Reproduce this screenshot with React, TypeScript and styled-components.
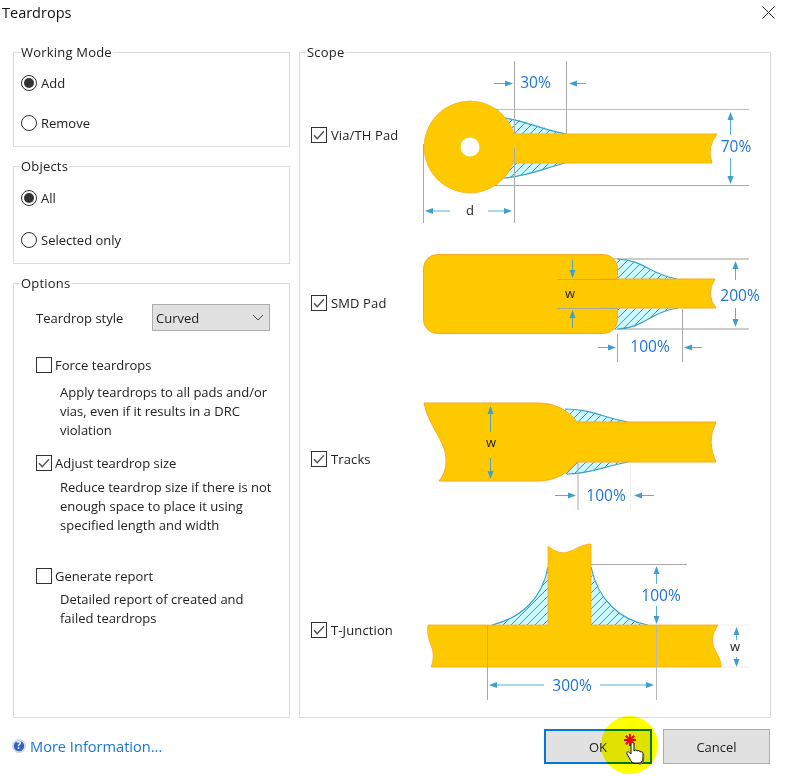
import React from "react";
import styled, { createGlobalStyle } from "styled-components";

const Global = createGlobalStyle`
  html, body { margin: 0; padding: 0; background: #fff; }
  body { font-family: "Open Sans", "Noto Sans", "Liberation Sans", sans-serif; color: #222; }
`;

const Page = styled.div`
  position: relative;
  width: 786px;
  height: 776px;
  overflow: hidden;
  background: #fff;
  font-size: 13px;
  line-height: 18px;
  display: flex;
  flex-direction: column;
`;
const TitleBar = styled.header`
  height: 43px;
  flex: none;
  display: flex;
  justify-content: space-between;
  padding: 3px 11px 0 2px;
  box-sizing: border-box;
`;
const Title = styled.h1`
  margin: 0;
  font-size: 14.5px;
  font-weight: 400;
  line-height: 20px;
  color: #111;
`;
const CloseIcon = styled.svg`
  width: 13px;
  height: 13px;
  margin-top: 3px;
`;
const Main = styled.main`
  display: flex;
  gap: 9px;
  padding: 0 15px 0 13px;
  height: 675px;
  flex: none;
`;
const LeftColumn = styled.div`
  width: 277px;
  flex: none;
  display: flex;
  flex-direction: column;
  gap: 10px;
`;
const Group = styled.fieldset<{ $grow?: boolean; $height?: number }>`
  margin: 0;
  padding: 0 7px;
  min-width: 0;
  border: 1px solid #dcdcdc;
  box-sizing: border-box;
  ${(p) => (p.$height ? `height: ${p.$height}px; flex: none;` : "")}
  ${(p) => (p.$grow ? "flex: 1;" : "")}
`;
const Legend = styled.legend`
  padding: 0 1px 0 0;
  font-size: 13px;
  line-height: 18px;
  letter-spacing: 0.2px;
`;
const RadioItem = styled.div<{ $top: number }>`
  display: flex;
  align-items: center;
  gap: 4px;
  height: 16px;
  margin-top: ${(p) => p.$top}px;
`;
const RadioMark = styled.span<{ $on?: boolean }>`
  width: 16px;
  height: 16px;
  box-sizing: border-box;
  border: 1px solid #333;
  border-radius: 50%;
  display: flex;
  align-items: center;
  justify-content: center;
  &::after {
    content: "";
    width: 10px;
    height: 10px;
    border-radius: 50%;
    background: ${(p) => (p.$on ? "#333" : "transparent")};
  }
`;
const OptionsBody = styled.div`
  padding-left: 15px;
`;
const StyleRow = styled.div`
  display: flex;
  align-items: center;
  justify-content: space-between;
  height: 27px;
  width: 234px;
  margin-top: 12px;
`;
const Select = styled.div`
  width: 118px;
  height: 27px;
  box-sizing: border-box;
  background: #e1e1e1;
  border: 1px solid #adadad;
  display: flex;
  align-items: center;
  justify-content: space-between;
  padding: 0 5px 0 3px;
`;
const CheckItem = styled.label<{ $top: number }>`
  display: flex;
  align-items: center;
  gap: 3px;
  height: 16px;
  white-space: nowrap;
  margin-top: ${(p) => p.$top}px;
`;
const Box = styled.span`
  width: 16px;
  height: 16px;
  flex: none;
  box-sizing: border-box;
  border: 1px solid #333;
  display: flex;
  align-items: center;
  justify-content: center;
  background: #fff;
`;
const Desc = styled.p<{ $top: number }>`
  margin: ${(p) => p.$top}px 0 0 24px;
  line-height: 19px;
  width: 214px;
`;
const ScopeRow = styled.div<{ $h: number }>`
  display: flex;
  height: ${(p) => p.$h}px;
  margin-left: 4px;
`;
const ScopeCheckSlot = styled.div<{ $top: number }>`
  width: 103px;
  flex: none;
  margin-top: ${(p) => p.$top}px;
`;
const ScopeCheck = styled(CheckItem)`
  gap: 4px;
  margin-top: 0;
  letter-spacing: 0.12px;
`;
const Figure = styled.svg`
  width: 350px;
  flex: none;
  display: block;
  overflow: visible;
  font-family: "Open Sans", "Noto Sans", sans-serif;
`;
const Footer = styled.footer`
  display: flex;
  align-items: flex-start;
  justify-content: space-between;
  padding: 11px 16px 0 12px;
`;
const HelpLink = styled.a`
  display: flex;
  align-items: center;
  gap: 4px;
  color: #1a73d9;
  font-size: 14.6px;
  line-height: 20px;
  margin-top: 7px;
`;
const HelpIcon = styled.svg`
  width: 14px;
  height: 14px;
`;
const Buttons = styled.div`
  display: flex;
  gap: 11px;
`;
const Button = styled.button<{ $primary?: boolean }>`
  width: ${(p) => (p.$primary ? 108 : 107)}px;
  height: 35px;
  box-sizing: border-box;
  background: #e1e1e1;
  border: ${(p) => (p.$primary ? "2px solid #0078d7" : "1px solid #adadad")};
  font: inherit;
  color: #222;
  padding: 0;
  text-align: center;
`;
const Spot = styled.div`
  position: absolute;
  left: 601px;
  top: 716px;
  width: 57px;
  height: 58px;
  border-radius: 50%;
  background: #ffff00;
  mix-blend-mode: multiply;
  pointer-events: none;
`;
const Cursor = styled.svg`
  position: absolute;
  left: 620px;
  top: 732px;
  width: 26px;
  height: 34px;
  pointer-events: none;
`;

const GOLD = "#ffc900";
const EDGE = "#f9a825";
const GREY = "#a9a9a9";
const ARROW = "#3d9fd1";
const BLUE = "#1e74d6";

function Arrow({ x1, y1, x2, y2 }: { x1: number; y1: number; x2: number; y2: number }) {
  const d = Math.hypot(x2 - x1, y2 - y1);
  const ux = (x2 - x1) / d;
  const uy = (y2 - y1) / d;
  const bx = x2 - ux * 8;
  const by = y2 - uy * 8;
  const nx = -uy * 3;
  const ny = ux * 3;
  return (
    <g>
      <line x1={x1} y1={y1} x2={bx} y2={by} stroke={ARROW} strokeWidth={1} opacity={0.85} />
      <polygon points={`${x2},${y2} ${bx + nx},${by + ny} ${bx - nx},${by - ny}`} fill={ARROW} />
    </g>
  );
}

function Line({ x1, y1, x2, y2, c = GREY, w = 1 }: { x1: number; y1: number; x2: number; y2: number; c?: string; w?: number }) {
  return <line x1={x1} y1={y1} x2={x2} y2={y2} stroke={c} strokeWidth={w} />;
}

function Pct({ x, y, children }: { x: number; y: number; children: React.ReactNode }) {
  return (
    <text x={x} y={y + 6} textAnchor="middle" fontSize={15.5} fill={BLUE}>
      {children}
    </text>
  );
}
function Dim({ x, y, children }: { x: number; y: number; children: React.ReactNode }) {
  return (
    <text x={x} y={y + 4} textAnchor="middle" fontSize={13} fill="#222">
      {children}
    </text>
  );
}

function Hatch({ id }: { id: string }) {
  return (
    <defs>
      <pattern id={id} patternUnits="userSpaceOnUse" width={8} height={8}>
        <rect width={8} height={8} fill="#c9f9fc" />
        <path d="M0 8 L8 0 M-2 2 L2 -2 M6 10 L10 6" stroke="#3398c9" strokeWidth={1} fill="none" />
      </pattern>
    </defs>
  );
}

function Drop({ id, fill, edge }: { id: string; fill: string; edge: string }) {
  return (
    <g>
      <path d={fill} fill={`url(#${id})`} />
      <path d={edge} fill="none" stroke="#3d9fd1" strokeWidth={1.2} />
    </g>
  );
}

function Check() {
  return (
    <svg width="12" height="10" viewBox="0 0 12 10">
      <path d="M1 5.2 L4.2 8.6 L11 1.2" fill="none" stroke="#555" strokeWidth="1.4" />
    </svg>
  );
}

function ViaFigure() {
  return (
    <Figure viewBox="414 61 350 171" height={171}>
      <Hatch id="h1" />
      <Line x1={495} y1={109.5} x2={749} y2={109.5} c="#bdbdbd" />
      <Line x1={495} y1={185.5} x2={749} y2={185.5} />
      <Drop id="h1" fill="M500 117 C530 120 545 130 567 134 L510 150 L520 163 L565 163 C545 168 525 178 500 178 Z" edge="M505 118 C530 122 545 131 567 134 M565 163 C545 168 525 177 503 178" />
      <Line x1={514.5} y1={61} x2={514.5} y2={134} />
      <Line x1={566.5} y1={61} x2={566.5} y2={134} />
      <path d="M510 134 H717 Q706 148 712 163 H510 Z" fill={GOLD} stroke={EDGE} strokeWidth={1} />
      <circle cx={470} cy={147} r={46} fill={GOLD} stroke={EDGE} strokeWidth={0.6} />
      <path d="M512 134.5 H716 Q707 148 711 162.5 H512 Z" fill={GOLD} />
      <circle cx={470} cy={147} r={9.5} fill="#fff" />
      <Line x1={423.5} y1={144} x2={423.5} y2={223} />
      <Line x1={514.5} y1={148} x2={514.5} y2={223} />
      <Arrow x1={494} y1={83.5} x2={513} y2={83.5} />
      <Arrow x1={586} y1={83.5} x2={569} y2={83.5} />
      <Pct x={535.5} y={82}>30%</Pct>
      <Arrow x1={730.5} y1={135} x2={730.5} y2={112} />
      <Arrow x1={730.5} y1={158} x2={730.5} y2={184} />
      <Pct x={736} y={146}>70%</Pct>
      <Arrow x1={450} y1={211} x2={425} y2={211} />
      <Arrow x1={488} y1={211} x2={512} y2={211} />
      <Dim x={470} y={211}>d</Dim>
    </Figure>
  );
}

function SmdFigure() {
  return (
    <Figure viewBox="414 232 350 153" height={153}>
      <Hatch id="h2" />
      <Line x1={610} y1={259} x2={749} y2={259} c="#bdbdbd" w={1.5} />
      <Line x1={610} y1={329} x2={749} y2={329} c="#bdbdbd" w={1.5} />
      <Drop id="h2" fill="M612 259 H617 C645 260 650 275 677 279 L617 295 L678 308 C650 312 645 328 617 329 H612 Z" edge="M617 259 C645 260 650 275 677 279 M678 308 C650 312 645 328 617 329" />
      <rect x={423.5} y={254.5} width={194} height={79} rx={14} fill={GOLD} stroke={EDGE} strokeWidth={1} />
      <path d="M600 279 H715 Q705 294 716 308 H600" fill={GOLD} stroke={EDGE} strokeWidth={1} />
      <rect x={590} y={280} width={40} height={27} fill={GOLD} />
      <Line x1={557} y1={279.5} x2={617} y2={279.5} />
      <Line x1={557} y1={308.5} x2={617} y2={308.5} />
      <Line x1={617.5} y1={334} x2={617.5} y2={362} />
      <Line x1={682.5} y1={309} x2={682.5} y2={362} />
      <Arrow x1={572.5} y1={260} x2={572.5} y2={278} />
      <Arrow x1={572.5} y1={328} x2={572.5} y2={310} />
      <Dim x={570} y={294}>w</Dim>
      <Arrow x1={735.5} y1={280} x2={735.5} y2={261} />
      <Arrow x1={735.5} y1={308} x2={735.5} y2={327} />
      <Pct x={740} y={295}>200%</Pct>
      <Arrow x1={598} y1={347.5} x2={616} y2={347.5} />
      <Arrow x1={702} y1={347.5} x2={684} y2={347.5} />
      <Pct x={650} y={346}>100%</Pct>
    </Figure>
  );
}

function TracksFigure() {
  return (
    <Figure viewBox="414 385 350 145" height={145}>
      <Hatch id="h3" />
      <Line x1={630.5} y1={462} x2={630.5} y2={510} c="#eeeeee" />
      <Drop id="h3" fill="M560 409 C590 409 605 418 628 422 L570 430 L628 462 C605 465 590 474 565 474 Z" edge="M565 409 C590 409 605 418 628 422 M628 462 C605 466 590 474 567 474" />
      <path d="M424 403 H538 C555 403 568 410 577 422 H716 Q706 442 716 462 H577 C568 473 555 481 538 481 H439 C444 475 446.5 468 446 458 C445 440 428 425 424 403 Z" fill={GOLD} stroke={EDGE} strokeWidth={1} />
      <Line x1={578} y1={462} x2={578} y2={510} />
      <Arrow x1={490.5} y1={432} x2={490.5} y2={406} />
      <Arrow x1={490.5} y1={458} x2={490.5} y2={479} />
      <Dim x={491} y={443}>w</Dim>
      <Arrow x1={555} y1={495.5} x2={576} y2={495.5} />
      <Arrow x1={654} y1={495.5} x2={634} y2={495.5} />
      <Pct x={606} y={495}>100%</Pct>
    </Figure>
  );
}

function TeeFigure() {
  return (
    <Figure viewBox="414 530 350 182" height={182}>
      <Hatch id="h4" />
      <Line x1={718} y1={625} x2={750} y2={625} c="#eeeeee" />
      <Line x1={718} y1={667} x2={750} y2={667} c="#eeeeee" />
      <Line x1={591} y1={564.5} x2={687} y2={564.5} />
      <Drop id="h4" fill="M548 567 C542 600 520 618 492 625 H550 V567 Z" edge="M548 567 C542 600 520 618 492 625" />
      <Drop id="h4" fill="M590 567 C598 600 620 620 648 625 H590 Z" edge="M591 567 C598 600 620 620 648 625" />
      <path d="M548 546 C555 552 562 554 568 552 C575 550 582 544 591 544 V625 H718 C712 634 711 642 715 650 C718 655 721 660 721 667 H431 C434 660 434 652 431 645 C428 638 427 632 428 625 H548 Z" fill={GOLD} stroke={EDGE} strokeWidth={0.8} />
      <Line x1={487.5} y1={625} x2={487.5} y2={700} />
      <Line x1={656.5} y1={625} x2={656.5} y2={700} c="#b8b8b8" />
      <Arrow x1={656.5} y1={584} x2={656.5} y2={566} />
      <Arrow x1={656.5} y1={606} x2={656.5} y2={624} />
      <Pct x={661} y={595}>100%</Pct>
      <Arrow x1={544} y1={685} x2={489} y2={685} />
      <Arrow x1={600} y1={685} x2={654} y2={685} />
      <Pct x={572} y={685}>300%</Pct>
      <Arrow x1={736.5} y1={640} x2={736.5} y2={627} />
      <Arrow x1={736.5} y1={657} x2={736.5} y2={667} />
      <Dim x={735} y={647}>w</Dim>
    </Figure>
  );
}

const scopeRows = [
  { label: "Via/TH Pad", h: 171, top: 66, Fig: ViaFigure },
  { label: "SMD Pad", h: 153, top: 63, Fig: SmdFigure },
  { label: "Tracks", h: 145, top: 66, Fig: TracksFigure },
  { label: "T-Junction", h: 182, top: 92, Fig: TeeFigure },
];

export default function App() {
  return (
    <Page>
      <Global />
      <TitleBar>
        <Title>Teardrops</Title>
        <CloseIcon viewBox="0 0 13 13">
          <path d="M0.5 0.5 L12.5 12.5 M12.5 0.5 L0.5 12.5" stroke="#222" strokeWidth="1" fill="none" />
        </CloseIcon>
      </TitleBar>
      <Main>
        <LeftColumn>
          <Group $height={104}>
            <Legend>Working Mode</Legend>
            <RadioItem $top={14}><RadioMark $on />Add</RadioItem>
            <RadioItem $top={24}><RadioMark />Remove</RadioItem>
          </Group>
          <Group $height={107}>
            <Legend>Objects</Legend>
            <RadioItem $top={15}><RadioMark $on />All</RadioItem>
            <RadioItem $top={26}><RadioMark />Selected only</RadioItem>
          </Group>
          <Group $grow>
            <Legend>Options</Legend>
            <OptionsBody>
              <StyleRow>
                <span>Teardrop style</span>
                <Select>
                  <span>Curved</span>
                  <svg width="12" height="7" viewBox="0 0 12 7">
                    <path d="M1 1 L6 6 L11 1" fill="none" stroke="#444" strokeWidth="1" />
                  </svg>
                </Select>
              </StyleRow>
              <CheckItem $top={26}><Box />Force teardrops</CheckItem>
              <Desc $top={10}>Apply teardrops to all pads and/or vias, even if it results in a DRC violation</Desc>
              <CheckItem $top={15}><Box><Check /></Box>Adjust teardrop size</CheckItem>
              <Desc $top={7}>Reduce teardrop size if there is not enough space to place it using specified length and width</Desc>
              <CheckItem $top={33}><Box />Generate report</CheckItem>
              <Desc $top={6}>Detailed report of created and failed teardrops</Desc>
            </OptionsBody>
          </Group>
        </LeftColumn>
        <Group $grow>
          <Legend>Scope</Legend>
          {scopeRows.map(({ label, h, top, Fig }) => (
            <ScopeRow key={label} $h={h}>
              <ScopeCheckSlot $top={top}>
                <ScopeCheck $top={0}><Box><Check /></Box>{label}</ScopeCheck>
              </ScopeCheckSlot>
              <Fig />
            </ScopeRow>
          ))}
        </Group>
      </Main>
      <Footer>
        <HelpLink>
          <HelpIcon viewBox="0 0 14 14">
            <circle cx="7" cy="7" r="6.6" fill="#dfe4f2" stroke="#b8bfd4" strokeWidth="0.6" />
            <circle cx="7" cy="7" r="5.2" fill="#2f62c4" />
            <text x="7" y="10.4" textAnchor="middle" fontSize="10" fontWeight="700" fill="#fff">?</text>
          </HelpIcon>
          More Information...
        </HelpLink>
        <Buttons>
          <Button $primary>OK</Button>
          <Button>Cancel</Button>
        </Buttons>
      </Footer>
      <Spot />
      <Cursor viewBox="0 0 26 34">
        <g stroke="#f00000" strokeWidth="2">
          <path d="M10 2 V14 M4 8 H16 M5.8 3.8 L14.2 12.2 M14.2 3.8 L5.8 12.2" />
        </g>
        <path d="M11 12 C11 10 14 10 14 12 V19 C15 17.5 17 18 17 19 C18 18 20 18.5 20 20 C21 19.2 23 19.8 23 21.5 V26 C23 29 21 31 19 31 H14 C12 31 11 29 10 27 L7 22 C6 20 8 19 9.5 20.5 L11 22 Z" fill="#fff" stroke="#111" strokeWidth="1" />
        <path d="M23.5 22 V27 C23.5 30 22 32 19 32" fill="none" stroke="#666" strokeWidth="1.4" />
      </Cursor>
    </Page>
  );
}
